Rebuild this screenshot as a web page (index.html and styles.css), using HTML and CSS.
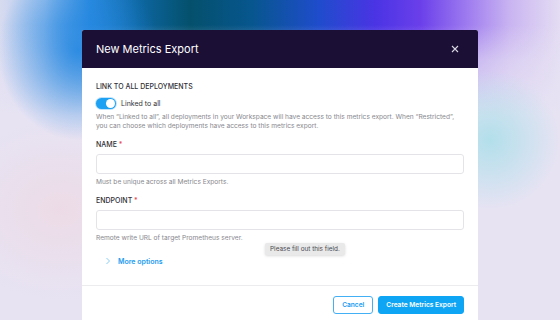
FILE: index.html
```html
<!DOCTYPE html>
<html lang="en">
<head>
    <meta charset="UTF-8">
    <title>New Metrics Export</title>
    <link rel="stylesheet" href="styles.css">
</head>
<body>
    <div class="modal">
        <div class="modal-header">
            <h2 class="modal-title">New Metrics Export</h2>
            <svg class="close-button" width="8" height="8" viewBox="0 0 8 8"><path d="M1 1 L7 7 M7 1 L1 7" stroke="#d9d6e2" stroke-width="1.1"/></svg>
        </div>
        <div class="modal-body">
            <p class="field-label">Link to all deployments</p>
            <div class="toggle-row">
                <span class="toggle"><span class="toggle-knob"></span></span>
                <span class="toggle-text">Linked to all</span>
            </div>
            <p class="help-text">When “Linked to all”, all deployments in your Workspace will have access to this metrics export. When “Restricted”, you can choose which deployments have access to this metrics export.</p>

            <div class="field">
                <p class="field-label">Name <span class="required">*</span></p>
                <input class="text-input" type="text">
                <p class="help-text">Must be unique across all Metrics Exports.</p>
            </div>

            <div class="field field-endpoint">
                <p class="field-label">Endpoint <span class="required">*</span></p>
                <input class="text-input" type="text">
                <p class="help-text">Remote write URL of target Prometheus server.</p>
                <span class="tooltip">Please fill out this field.</span>
            </div>

            <div class="more-options">
                <svg class="chevron" width="6" height="8" viewBox="0 0 6 8"><path d="M1.5 1 L4.5 4 L1.5 7" fill="none" stroke="#7cc6f5" stroke-width="0.9"/></svg>
                <span>More options</span>
            </div>
        </div>
        <div class="modal-footer">
            <button class="button button-outline">Cancel</button>
            <button class="button button-primary">Create Metrics Export</button>
        </div>
    </div>
</body>
</html>
```

FILE: styles.css
```css
html, body {
    height: 100%;
}

body {
    margin: 0;
    padding-top: 30px;
    box-sizing: border-box;
    display: flex;
    justify-content: center;
    overflow: hidden;
    font-family: Inter, 'Noto Sans', sans-serif;
    background-color: #e7e3f3;
    background-image:
        radial-gradient(ellipse 70px 70px at 490px 140px, rgba(160, 222, 232, 0.75), rgba(160, 222, 232, 0)),
        radial-gradient(ellipse 80px 90px at 78px 50px, rgba(35, 135, 225, 0.9), rgba(35, 135, 225, 0)),
        radial-gradient(ellipse 110px 90px at 60px 210px, rgba(240, 214, 222, 0.6), rgba(240, 214, 222, 0)),
        linear-gradient(to bottom, rgba(231, 227, 243, 0) 0, rgba(231, 227, 243, 0) 25px, rgba(231, 227, 243, 0.55) 60px, #e7e3f3 115px),
        linear-gradient(90deg, #d8dbf0 0, #a6c6ee 8%, #2a8ade 16%, #0d66a0 25%, #04506c 34%, #07568e 45%, #1f4ccc 57%, #4a34e4 67%, #6a3fea 75%, #9c78ef 83%, #c9b4f1 91%, #e4ddf3 100%);
}

.modal {
    width: 396px;
    align-self: flex-start;
    background-color: #ffffff;
    border-radius: 2px 2px 0 0;
    overflow: hidden;
}

.modal-header {
    height: 38px;
    padding: 0 19px 0 14px;
    display: flex;
    align-items: center;
    justify-content: space-between;
    background-color: #1b0f36;
}

.modal-title {
    margin: 0;
    font-size: 11px;
    font-weight: 400;
    color: #ffffff;
}

.modal-body {
    padding: 14px 14px 19px;
}

.field-label {
    margin: 0 0 5px;
    font-size: 7px;
    line-height: 10px;
    font-weight: 500;
    text-transform: uppercase;
    color: #2f2f36;
}

.required {
    color: #e5484d;
}

.toggle-row {
    display: flex;
    align-items: center;
    gap: 5px;
    height: 12px;
    margin-bottom: 4px;
}

.toggle {
    width: 20px;
    height: 11px;
    padding: 1px;
    box-sizing: border-box;
    border-radius: 6px;
    background-color: #1da1f2;
    box-shadow: 0 0 0 1px #bfe3fb;
    display: flex;
    justify-content: flex-end;
}

.toggle-knob {
    width: 9px;
    height: 9px;
    border-radius: 50%;
    background-color: #ffffff;
}

.toggle-text {
    font-size: 7px;
    color: #333338;
}

.help-text {
    margin: 0;
    font-size: 6.6px;
    line-height: 8.5px;
    color: #88888e;
}

.field {
    margin-top: 10px;
}

.field .field-label {
    margin-bottom: 4px;
}

.field .help-text {
    margin-top: 4px;
    line-height: 8px;
}

.field-endpoint {
    position: relative;
}

.text-input {
    display: block;
    width: 100%;
    height: 20px;
    box-sizing: border-box;
    border: 1px solid #e4e4e8;
    border-radius: 3px;
    background-color: #ffffff;
    outline: none;
}

.tooltip {
    position: absolute;
    top: 47px;
    left: 169px;
    height: 12px;
    padding: 0 5px;
    display: flex;
    align-items: center;
    font-size: 6.4px;
    color: #4a4a4e;
    background-color: #e9e9ea;
    border-radius: 2px;
    box-shadow: 0 1px 3px rgba(0, 0, 0, 0.15);
    white-space: nowrap;
}

.more-options {
    margin-top: 14px;
    padding-left: 9px;
    height: 10px;
    display: flex;
    align-items: center;
    gap: 7px;
    font-size: 7px;
    font-weight: 600;
    color: #1b9cf0;
}

.modal-footer {
    border-top: 1px solid #ececef;
    padding: 10px 14px 10px;
    display: flex;
    justify-content: flex-end;
    gap: 5px;
}

.button {
    height: 18px;
    padding: 0 7px;
    font-family: Inter, 'Noto Sans', sans-serif;
    font-size: 6.6px;
    font-weight: 600;
    border-radius: 3px;
    cursor: pointer;
}

.button-outline {
    padding: 0 8px;
    color: #1b9cf0;
    background-color: #ffffff;
    border: 1px solid #43b0f5;
}

.button-primary {
    color: #ffffff;
    background-color: #0ea5f5;
    border: 1px solid #0ea5f5;
}
```
